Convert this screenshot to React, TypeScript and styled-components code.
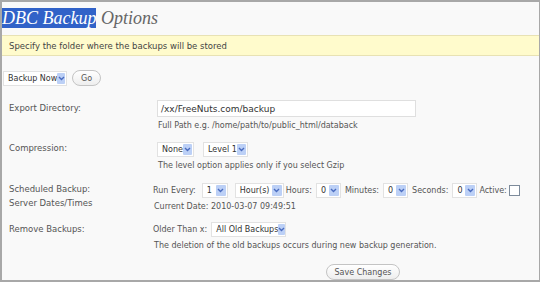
import React from "react";
import styled, { createGlobalStyle } from "styled-components";

const GlobalStyle = createGlobalStyle`
  html, body {
    margin: 0;
    padding: 0;
    background: #ffffff;
  }
`;

const Frame = styled.div`
  width: 540px;
  height: 282px;
  box-sizing: border-box;
  border: 1px solid #a8a8a8;
  border-top-width: 2px;
  border-left-width: 2px;
  border-bottom-width: 2px;
  background: #f9f9f9;
  font-family: "DejaVu Sans", Verdana, sans-serif;
  font-size: 8px;
  color: #555;
  overflow: hidden;
`;

const Title = styled.h2`
  margin: 6px 0 0 0;
  height: 21px;
  font-family: "Liberation Serif", "Times New Roman", serif;
  font-style: italic;
  font-weight: normal;
  font-size: 18px;
  line-height: 21px;
  color: #666;
`;

const Highlight = styled.span`
  background: #3162c8;
  color: #fff;
`;

const Notice = styled.div`
  margin-top: 6px;
  height: 19px;
  display: flex;
  align-items: center;
  padding-left: 7px;
  background: #fffbcc;
  border-top: 1px solid #e8e2b4;
  border-bottom: 1px solid #e8e2b4;
  font-size: 8.5px;
  color: #444;
`;

const Toolbar = styled.div`
  display: flex;
  align-items: center;
  gap: 5px;
  margin: 14px 0 0 1px;
  height: 16px;
`;

const SelectBox = styled.div<{ $w: number; $offset?: number }>`
  display: inline-flex;
  align-items: center;
  justify-content: space-between;
  box-sizing: border-box;
  width: ${(p) => p.$w}px;
  height: 15px;
  margin-left: ${(p) => p.$offset ?? 0}px;
  padding: 0 1px 0 4px;
  background: #fff;
  border: 1px solid #e2e2e2;
  color: #333;
  white-space: nowrap;
`;

const Arrow = styled.span`
  display: inline-flex;
  align-items: center;
  justify-content: center;
  width: 10px;
  height: 11px;
  background: #bcd0f6;
  border-radius: 1px;
`;

const Select = ({
  w,
  offset,
  children,
}: {
  w: number;
  offset?: number;
  children: React.ReactNode;
}) => (
  <SelectBox $w={w} $offset={offset}>
    <span>{children}</span>
    <Arrow>
      <svg width="7" height="5" viewBox="0 0 7 5">
        <path d="M1 1 L3.5 3.5 L6 1" fill="none" stroke="#4a6cc0" strokeWidth="1.4" />
      </svg>
    </Arrow>
  </SelectBox>
);

const PillButton = styled.button`
  box-sizing: border-box;
  height: 16px;
  padding: 0 8px;
  border: 1px solid #c4c4c4;
  border-radius: 8px;
  background: linear-gradient(#ffffff, #eeeeee);
  font-family: inherit;
  font-size: 8px;
  color: #555;
`;

const Form = styled.div`
  display: grid;
  grid-template-columns: 151px 1fr;
  margin-top: 14px;
`;

const Label = styled.div<{ $top: number }>`
  padding: ${(p) => p.$top}px 0 0 7px;
  font-size: 8.5px;
  line-height: 14px;
  color: #555;
`;

const Field = styled.div<{ $indent?: number; $gap: number }>`
  padding-left: ${(p) => p.$indent ?? 0}px;
  padding-bottom: ${(p) => p.$gap}px;
  display: flex;
  flex-direction: column;
`;

const Line = styled.div`
  display: flex;
  align-items: center;
  gap: 4px;
  height: 16px;
  white-space: nowrap;
`;

const TextInput = styled.div`
  box-sizing: border-box;
  width: 259px;
  height: 17px;
  padding-left: 3px;
  display: flex;
  align-items: center;
  background: #fff;
  border: 1px solid #dfdfdf;
  font-size: 9px;
  color: #333;
`;

const Help = styled.div`
  margin-top: 3px;
  padding-left: 1px;
  line-height: 11px;
  color: #555;
`;

const Tight = styled.span`
  margin-left: -2px;
`;

const Checkbox = styled.span`
  display: inline-block;
  box-sizing: border-box;
  width: 11px;
  height: 11px;
  border: 1px solid #7d8b9b;
  background: #fff;
  margin-left: -2px;
`;

const Submit = styled.div`
  display: flex;
  justify-content: center;
  padding-left: 185px;
  margin-top: 5px;
`;

export default function App() {
  return (
    <>
      <GlobalStyle />
      <Frame>
        <Title>
          <Highlight>DBC Backup</Highlight> Options
        </Title>
        <Notice>Specify the folder where the backups will be stored</Notice>
        <Toolbar>
          <Select w={64}>Backup Now</Select>
          <PillButton>Go</PillButton>
        </Toolbar>
        <Form>
          <Label $top={1}>Export Directory:</Label>
          <Field $indent={4} $gap={10}>
            <TextInput>/xx/FreeNuts.com/backup</TextInput>
            <Help>Full Path e.g. /home/path/to/public_html/databack</Help>
          </Field>

          <Label $top={0}>Compression:</Label>
          <Field $indent={4} $gap={11}>
            <Line>
              <Select w={37}>None</Select>
              <Select w={45} offset={5}>Level 1</Select>
            </Line>
            <Help>The level option applies only if you select Gzip</Help>
          </Field>

          <Label $top={0}>
            Scheduled Backup:
            <br />
            Server Dates/Times
          </Label>
          <Field $gap={9}>
            <Line>
              <span>Run Every:</span>
              <Select w={26} offset={2}>1</Select>
              <Select w={49} offset={3}>Hour(s)</Select>
              <Tight>Hours:</Tight>
              <Select w={25}>0</Select>
              <span>Minutes:</span>
              <Select w={25}>0</Select>
              <span>Seconds:</span>
              <Select w={25}>0</Select>
              <Tight>Active:</Tight>
              <Checkbox />
            </Line>
            <Help>Current Date: 2010-03-07 09:49:51</Help>
          </Field>

          <Label $top={1}>Remove Backups:</Label>
          <Field $gap={8}>
            <Line>
              <span>Older Than x:</span>
              <Select w={75}>All Old Backups</Select>
            </Line>
            <Help>The deletion of the old backups occurs during new backup generation.</Help>
          </Field>
        </Form>
        <Submit>
          <PillButton>Save Changes</PillButton>
        </Submit>
      </Frame>
    </>
  );
}
